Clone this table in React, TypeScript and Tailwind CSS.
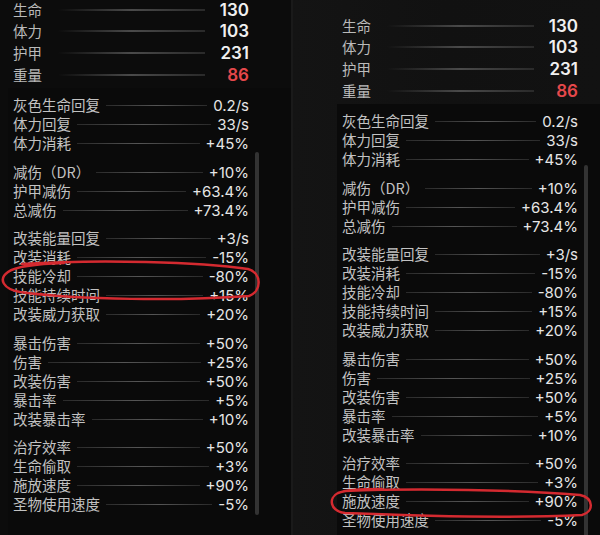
type Row = { label: string; value: string };

const topRows: (Row & { red?: boolean })[] = [
  { label: '生命', value: '130' },
  { label: '体力', value: '103' },
  { label: '护甲', value: '231' },
  { label: '重量', value: '86', red: true },
];

const groups: Row[][] = [
  [
    { label: '灰色生命回复', value: '0.2/s' },
    { label: '体力回复', value: '33/s' },
    { label: '体力消耗', value: '+45%' },
  ],
  [
    { label: '减伤（DR）', value: '+10%' },
    { label: '护甲减伤', value: '+63.4%' },
    { label: '总减伤', value: '+73.4%' },
  ],
  [
    { label: '改装能量回复', value: '+3/s' },
    { label: '改装消耗', value: '-15%' },
    { label: '技能冷却', value: '-80%' },
    { label: '技能持续时间', value: '+15%' },
    { label: '改装威力获取', value: '+20%' },
  ],
  [
    { label: '暴击伤害', value: '+50%' },
    { label: '伤害', value: '+25%' },
    { label: '改装伤害', value: '+50%' },
    { label: '暴击率', value: '+5%' },
    { label: '改装暴击率', value: '+10%' },
  ],
  [
    { label: '治疗效率', value: '+50%' },
    { label: '生命偷取', value: '+3%' },
    { label: '施放速度', value: '+90%' },
    { label: '圣物使用速度', value: '-5%' },
  ],
];

const cjk = "font-['Noto_Sans_CJK_SC','Noto_Sans',sans-serif]";
const num = "font-['Inter','Noto_Sans',sans-serif]";

function StatsPanel({ scrollTop }: { scrollTop: string }) {
  return (
    <div className="flex flex-col">
      <div className="w-[236px] flex flex-col ml-[5px]">
        {topRows.map((r, i) => (
          <div key={r.label} className={`flex items-center ${i === 0 ? 'h-[20px]' : 'h-[22px]'}`}>
            <span className={`w-[45px] text-[14.5px] leading-none text-[#bababa] ${cjk}`}>{r.label}</span>
            <div className="w-[147px] h-[2px] bg-gradient-to-r from-transparent via-[#4a4a4a] to-[#2a2a2a]" />
            <span
              className={`flex-1 text-right text-[17px] leading-none font-semibold ${num} ${
                r.red ? 'text-[#e5484b]' : 'text-[#f0f0f0]'
              }`}
            >
              {r.value}
            </span>
          </div>
        ))}
      </div>
      <div className="mt-[2px] pt-[8px] pl-[5px] pr-[2px] flex bg-[#0a0a0a] h-[460px]">
        <div className="w-[236px] flex flex-col gap-[9.5px]">
          {groups.map((g, i) => (
            <div key={i} className="flex flex-col">
              {g.map((r) => (
                <div key={r.label} className="h-[19px] flex items-center">
                  <span className={`text-[14.5px] leading-none text-[#c2c2c2] whitespace-nowrap ${cjk}`}>{r.label}</span>
                  <div className="flex-1 h-px mx-[6px] bg-gradient-to-r from-[#2a2a2a] via-[#555555] to-[#2a2a2a]" />
                  <span className={`text-[15px] leading-none text-[#e6e6e6] ${num}`}>{r.value}</span>
                </div>
              ))}
            </div>
          ))}
        </div>
        <div className={`w-[4px] ml-[6px] rounded-sm bg-[#333333] ${scrollTop}`} />
      </div>
    </div>
  );
}

export default function App() {
  return (
    <div className="relative w-[600px] h-[535px] overflow-hidden flex bg-[#0c0c0c]">
      <div className="w-[291px] pl-[8px] bg-[#0c0c0c]">
        <StatsPanel scrollTop="mt-[56px] h-[363px]" />
      </div>
      <div className="w-[2px] bg-[#1a1a1a]" />
      <div className="flex-1 pl-[44px] pt-[16px] bg-gradient-to-r from-[#141414] via-[#111111] to-[#121212]">
        <StatsPanel scrollTop="mt-[53px] h-[400px]" />
      </div>

      <svg className="absolute inset-0 pointer-events-none" width="600" height="535" viewBox="0 0 600 535">
        <g fill="none" stroke="#d42a30" strokeWidth="2.5" strokeLinecap="round" strokeLinejoin="round">
          <path d="M22 264 C100 259 200 262 248 269 C262 273 262 291 249 296 C180 301 80 300 20 292 C3 289 -2 279 8 272 C15 267 32 264 64 263" />
          <path d="M345 491 C420 488 520 490 580 495 C594 498 594 512 582 515 C520 518 420 516 345 513 C330 511 328 498 338 493 C345 490 360 489 382 489" />
        </g>
      </svg>
    </div>
  );
}
